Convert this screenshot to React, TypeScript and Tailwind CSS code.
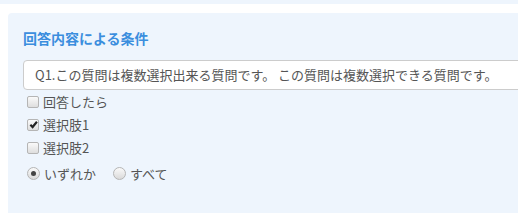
import { useState } from 'react'

function Box({ checked, onClick }: { checked: boolean; onClick: () => void }) {
  return (
    <span
      onClick={onClick}
      className="w-[12px] h-[12px] shrink-0 rounded-[2px] border border-[#b5b5b5] bg-gradient-to-b from-[#fafafa] to-[#dedede] flex items-center justify-center"
    >
      {checked && (
        <svg width="9" height="9" viewBox="0 0 10 10">
          <path d="M1.5 5.2 L4 7.8 L8.8 2" fill="none" stroke="#222222" strokeWidth="2.4" />
        </svg>
      )}
    </span>
  )
}

function Radio({ checked, onClick }: { checked: boolean; onClick: () => void }) {
  return (
    <span
      onClick={onClick}
      className="w-[13px] h-[13px] shrink-0 rounded-full border border-[#b5b5b5] bg-gradient-to-b from-[#fafafa] to-[#dadada] flex items-center justify-center"
    >
      {checked && <span className="w-[5px] h-[5px] rounded-full bg-[#444444]" />}
    </span>
  )
}

export default function App() {
  const [checks, setChecks] = useState({ answered: false, opt1: true, opt2: false })
  const [mode, setMode] = useState<'any' | 'all'>('any')

  return (
    <div
      className="w-[518px] h-[213px] overflow-hidden bg-white"
      style={{ fontFamily: '"Noto Sans CJK JP", "Liberation Sans", sans-serif' }}
    >
      <div className="h-[4px] bg-[#eef5fd]" />
      <div className="mt-[9px] ml-[8px] w-[540px] h-[260px] rounded-[4px] bg-[#eef5fd] pl-[15px] pt-[16px]">
        <h3 className="text-[14px] leading-[18px] font-bold text-[#3b8ede]">回答内容による条件</h3>

        <div className="mt-[13px] h-[30px] rounded-[4px] border border-[#cccccc] bg-white pl-[11px] flex items-center text-[13px] leading-[18px] text-[#555555] whitespace-nowrap">
          Q1.この質問は複数選択出来る質問です。 この質問は複数選択できる質問です。
        </div>

        <div className="pl-[4px] flex flex-col text-[13px] leading-[23px] text-[#555555]">
          <label className="flex items-center gap-[4px]">
            <Box checked={checks.answered} onClick={() => setChecks({ ...checks, answered: !checks.answered })} />
            回答したら
          </label>
          <label className="flex items-center gap-[4px]">
            <Box checked={checks.opt1} onClick={() => setChecks({ ...checks, opt1: !checks.opt1 })} />
            選択肢1
          </label>
          <label className="flex items-center gap-[4px]">
            <Box checked={checks.opt2} onClick={() => setChecks({ ...checks, opt2: !checks.opt2 })} />
            選択肢2
          </label>

          <div className="mt-[3px] flex items-center gap-[17px]">
            <label className="flex items-center gap-[4px]">
              <Radio checked={mode === 'any'} onClick={() => setMode('any')} />
              いずれか
            </label>
            <label className="flex items-center gap-[4px]">
              <Radio checked={mode === 'all'} onClick={() => setMode('all')} />
              すべて
            </label>
          </div>
        </div>
      </div>
    </div>
  )
}
